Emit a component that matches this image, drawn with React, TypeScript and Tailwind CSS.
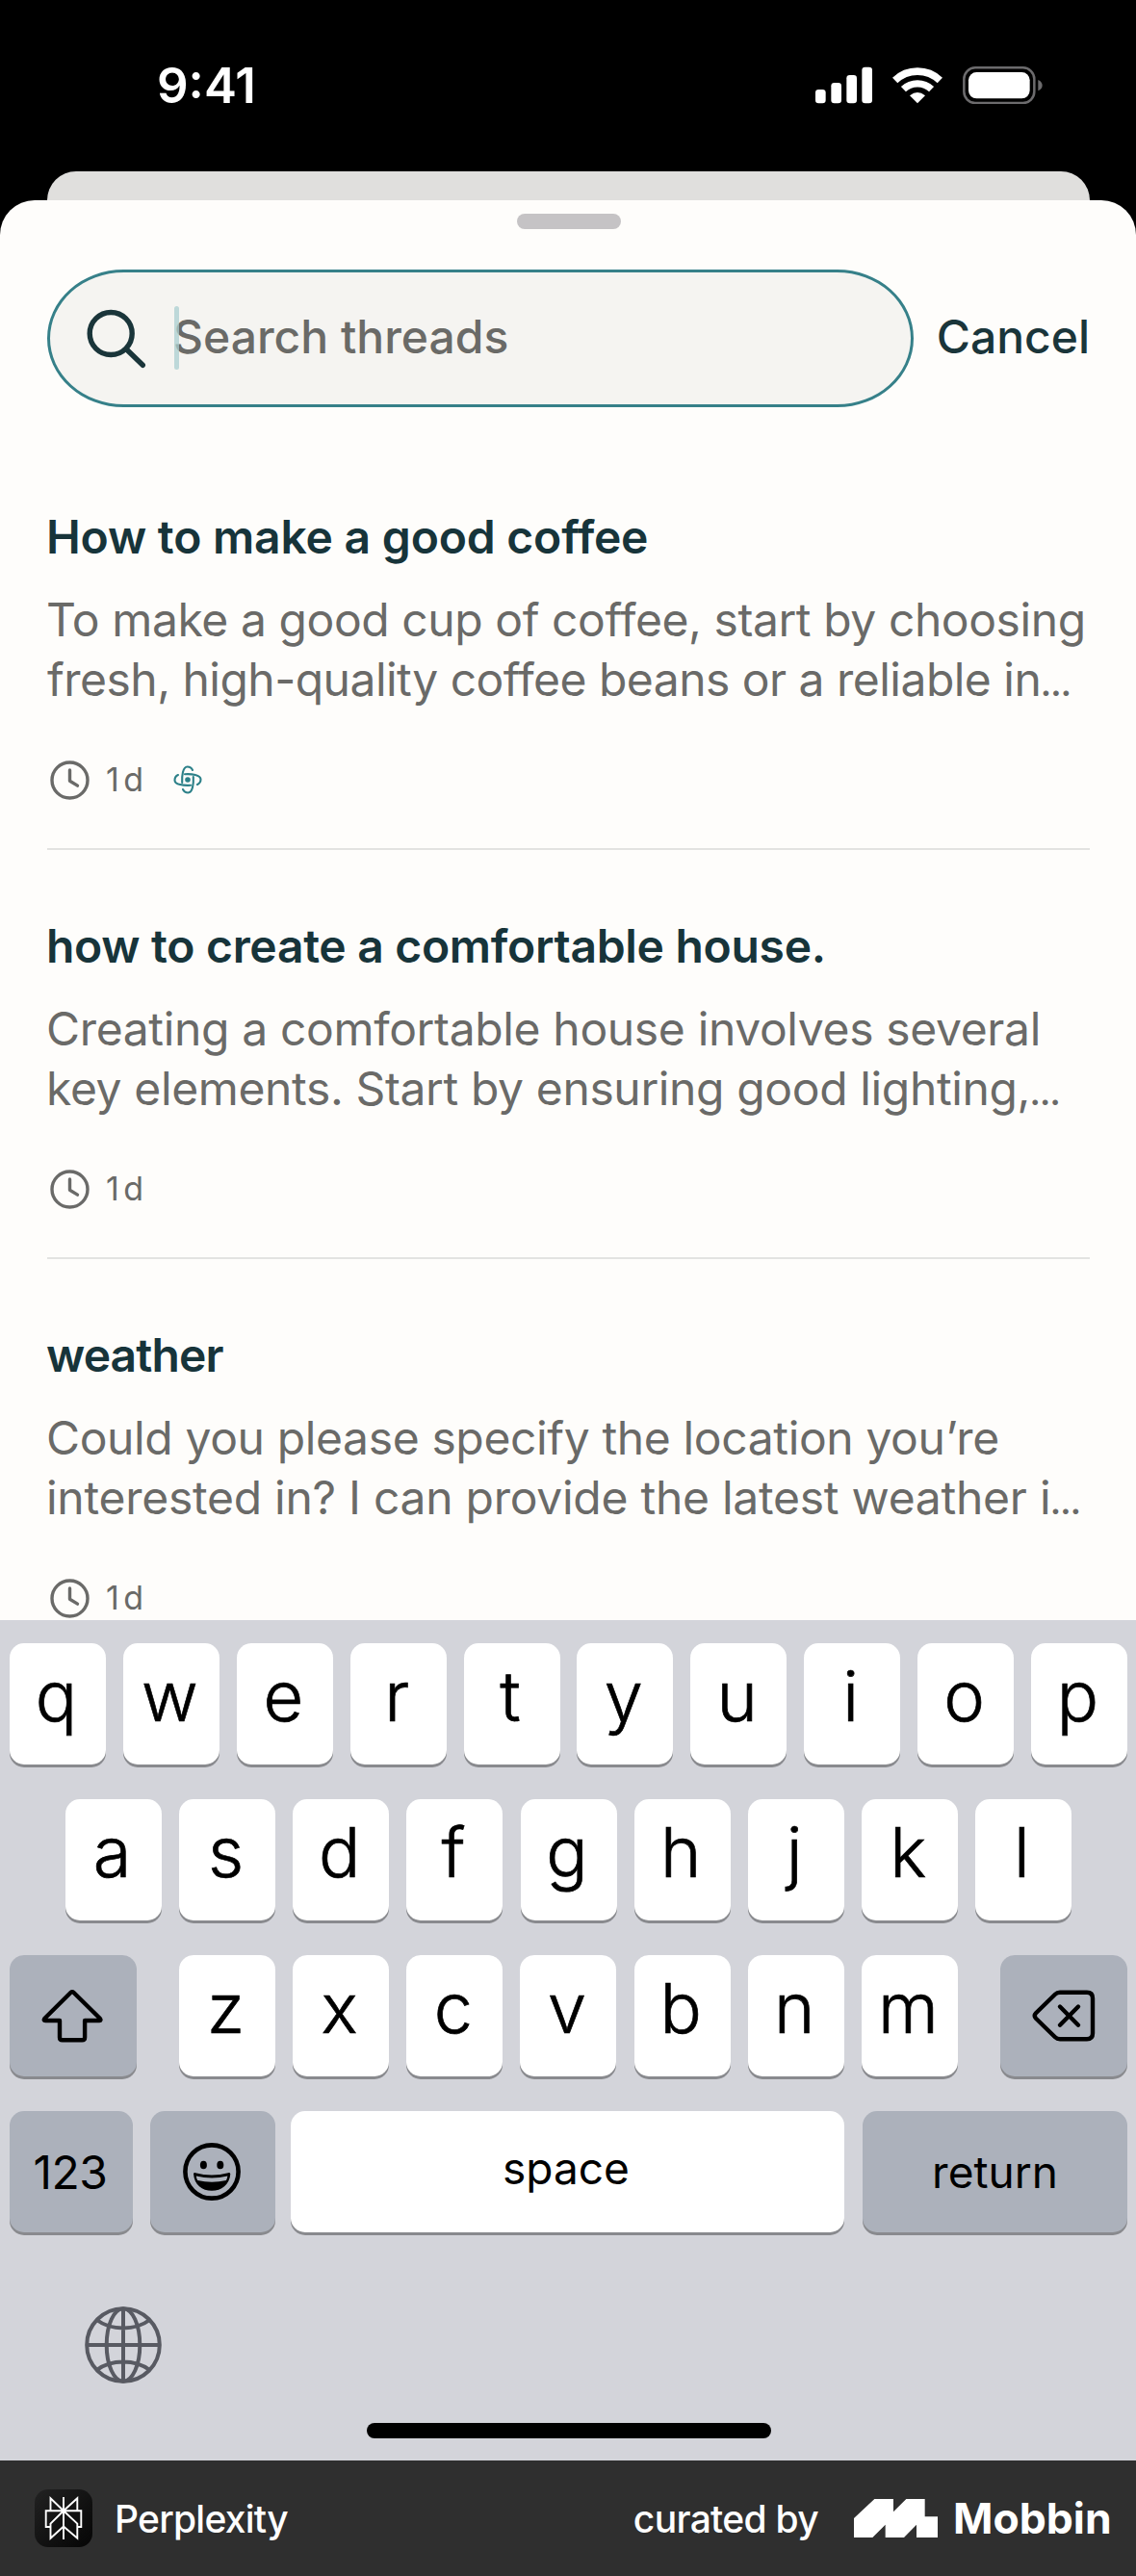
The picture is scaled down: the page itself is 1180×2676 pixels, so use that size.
import type { ReactNode } from "react";

function SignalIcon() {
  return (
    <svg className="h-[39.4px] w-[59px]" viewBox="80 55 177 118" fill="#fff">
      <rect x="80" y="127" width="32" height="43" rx="10" />
      <rect x="129" y="106" width="32" height="64" rx="10" />
      <rect x="177" y="82" width="32" height="88" rx="10" />
      <rect x="225" y="57" width="32" height="113" rx="10" />
    </svg>
  );
}

function WifiIcon() {
  return (
    <svg className="h-[39.4px] w-[52px]" viewBox="320 55 156 118" fill="none" stroke="#fff">
      <path d="M328 98.4A101.5 101.5 0 0 1 468 98.4" strokeWidth="23" />
      <path d="M354.3 126A63.5 63.5 0 0 1 441.7 126" strokeWidth="22" />
      <path d="M398 170L374 146Q398 126 422 146Z" fill="#fff" stroke="none" />
    </svg>
  );
}

function BatteryIcon() {
  return (
    <svg className="h-[39.4px] w-[83px]" viewBox="540 55 249 118">
      <rect x="544" y="59" width="219" height="110" rx="35" fill="none" stroke="#6c6b6d" strokeWidth="7.5" />
      <rect x="558" y="73" width="191" height="82" rx="25" fill="#fff" />
      <path d="M775 97Q788 103 788 114T775 131Z" fill="#6c6b6d" />
    </svg>
  );
}

function SearchIcon() {
  return (
    <svg className="size-[62px]" viewBox="90 320.5 62 62" fill="none" stroke="#1a353a" strokeWidth="5.4" strokeLinecap="round">
      <circle cx="115.2" cy="346" r="22" />
      <path d="M131.5 362.5L148.3 378.8" />
    </svg>
  );
}

function ClockIcon() {
  return (
    <svg className="size-[41px]" viewBox="-20.5 -20.5 41 41" fill="none" stroke="#6a6a68" strokeWidth="3.4" strokeLinecap="round" strokeLinejoin="round">
      <circle r="18.5" />
      <path d="M0 -10.5V0.8L8 5.6" />
    </svg>
  );
}

function KnotIcon() {
  const arm = "M-5.8 3C-6.2 -4 -5.2 -13.4 -0.4 -13.5Q3.4 -13.5 5 -10";
  return (
    <svg className="size-[30px]" viewBox="-15 -15 30 30" fill="none" stroke="#2c8088" strokeWidth="2.1" strokeLinecap="round">
      <path d={arm} />
      <path d={arm} transform="rotate(90)" />
      <path d={arm} transform="rotate(180)" />
      <path d={arm} transform="rotate(270)" />
      <circle r="2.8" fill="#2c8088" stroke="none" />
    </svg>
  );
}

function ShiftIcon() {
  return (
    <svg className="mr-0.5 h-14 w-16" viewBox="43.2 66 64 56" fill="none" stroke="#000" strokeWidth="4.4" strokeLinejoin="round">
      <path d="M73.8 69.8Q75.2 68.4 76.6 69.8L104 96.8Q105.6 99 103.4 99H88.3V116.4Q88.3 119.2 85.5 119.2H65Q62.2 119.2 62.2 116.4V99H47.4Q45 99 46.6 96.8Z" />
    </svg>
  );
}

function BackspaceIcon() {
  return (
    <svg className="mr-px h-14 w-[66px]" viewBox="1072 66.3 66 56" fill="none" stroke="#000" strokeWidth="4.4" strokeLinecap="round" strokeLinejoin="round">
      <path d="M1096 72Q1098 70 1101 70H1129Q1135 70 1135 76V112.6Q1135 118.6 1129 118.6H1101Q1098 118.6 1096 116.6L1076 97Q1073.5 94.3 1076 91.6Z" />
      <path d="M1101 84.8L1120 104M1120 84.8L1101 104" />
    </svg>
  );
}

function EmojiIcon() {
  return (
    <svg className="mr-[3px] size-[60px]" viewBox="-30 -30 60 60">
      <circle r="27.6" fill="none" stroke="#000" strokeWidth="4.6" />
      <ellipse cx="-8.6" cy="-7" rx="3.5" ry="4.3" />
      <ellipse cx="8.8" cy="-7" rx="3.5" ry="4.3" />
      <path d="M-19 2Q-18.5 0.8 -17 1.2Q0 5.6 17 1.2Q19 0.8 19.3 2.2C18.5 13.5 10 19.8 0 19.8S-18.3 13.5 -19 2Z" />
      <path d="M-16.2 4.4Q0 8.4 16.4 4.4Q16 6.8 15 9Q0 12.6 -14.8 9Q-16 6.6 -16.2 4.4Z" fill="#acb1bb" />
    </svg>
  );
}

function GlobeIcon() {
  return (
    <svg className="size-20" viewBox="-40 -40 80 80" fill="none" stroke="#585a62" strokeWidth="4">
      <circle r="37.8" />
      <ellipse rx="17.3" ry="37.8" />
      <path d="M0 -38V38M-38 0H38M-27.5 -26Q-16 -17.5 0 -17.5T27.5 -26M-27.5 26Q-16 17.5 0 17.5T27.5 26" />
    </svg>
  );
}

function PerplexityIcon() {
  return (
    <svg className="size-[60px] rounded-[14px] bg-linear-to-br from-[#222] to-[#060606]" viewBox="0 0 60 60" fill="none" stroke="#fff" strokeWidth="1.9">
      <path d="M30 8V52M30 22.3L16.5 9.2V22.3M30 22.3L44.3 9.2V22.3M16.5 39H11.7V22.3H48.3V39H44.3M30 22.3L16.5 35.6V50.8L30 38.5L44.3 50.8V35.6L30 22.3" />
    </svg>
  );
}

function MobbinIcon() {
  return (
    <svg className="h-10 w-[87px]" viewBox="81 78 261 120" fill="#fff">
      <path d="M81 138L145 78H204V118L244 78H302V133H342V198H276V158L237 198H179V158L139 198H81Z" />
    </svg>
  );
}

function Ellipsis() {
  return <span className="text-[28px] leading-none font-black tracking-normal">…</span>;
}

function Thread({ title, children, badge }: { title: ReactNode; children: ReactNode; badge?: boolean }) {
  return (
    <article className="h-[425px] shrink-0">
      <h2 className="-ml-px h-[62px] text-[48px] leading-[62px] font-semibold whitespace-nowrap text-[#17343a]">{title}</h2>
      <div className="mt-6 -ml-px h-[124px] text-[48px] leading-[62px] whitespace-nowrap text-[#6a6a68]">{children}</div>
      <div className="mt-[53px] ml-[3px] flex h-10 items-center text-[#6a6a68]">
        <ClockIcon />
        <span className="ml-[17px] w-[70px] text-[34px] leading-10 tracking-[4.5px]">1d</span>
        {badge && <KnotIcon />}
      </div>
      <div className="mt-[51px] h-0.5 bg-[#e3e3e1]" />
    </article>
  );
}

function Key({ className, children }: { className: string; children: ReactNode }) {
  return (
    <div className={`flex h-[126px] shrink-0 items-center justify-center rounded-[15px] text-black shadow-[0_3px_0_#898a8e] ${className}`}>
      {children}
    </div>
  );
}

function Letters({ keys }: { keys: string }) {
  return keys.split("").map((k) => (
    <Key key={k} className="w-[100px] bg-white pr-[3px] pb-4 text-[72px] leading-none font-light [-webkit-text-stroke:0.7px_#000]">
      {k}
    </Key>
  ));
}

export default function App() {
  return (
    <div className="flex h-[2676px] w-[1180px] flex-col overflow-hidden bg-black font-['Inter',sans-serif]">
      <header className="flex h-[178px] shrink-0 items-center pr-[97px] pb-px pl-[163px] text-white">
        <span className="text-[51px] leading-none font-semibold">9:41</span>
        <div className="ml-auto flex items-center">
          <SignalIcon />
          <div className="ml-[21px]">
            <WifiIcon />
          </div>
          <div className="ml-[21px]">
            <BatteryIcon />
          </div>
        </div>
      </header>

      <div className="mx-[49px] h-[30px] w-[1083px] shrink-0 rounded-t-[30px] bg-[#e0dfdd]" />

      <main className="flex h-[1475px] shrink-0 flex-col overflow-hidden rounded-t-[36px] bg-[#fefdfb] pr-12 pl-[49px]">
        <div className="mt-[14px] h-4 w-[108px] shrink-0 self-center rounded-full bg-[#c5c3c5]" />
        <div className="mt-[42px] flex h-[143px] shrink-0 items-center">
          <div className="flex h-[143px] w-[900px] items-center rounded-[80px/72px] border-[3px] border-[#368089] bg-[#f5f4f1] pl-[38px]">
            <SearchIcon />
            <div className="relative ml-[28px] pb-[3px] text-[48px] leading-[62px] font-medium whitespace-nowrap text-[#6a6a67]">
              Search threads
              <span className="absolute top-[-1px] left-px h-[66px] w-[5px] rounded-full bg-[#a9cfd0]/75" />
            </div>
          </div>
          <span className="ml-6 pb-[3px] text-[48px] leading-[62px] font-medium text-[#1a353a]">Cancel</span>
        </div>

        <section className="mt-[104px] flex flex-col">
          <Thread title={<span className="tracking-[-0.2px]">How to make a good coffee</span>} badge>
            <p className="tracking-[-0.42px]">To make a good cup of coffee, start by choosing</p>
            <p className="pl-px tracking-[-0.52px]">
              fresh, high-quality coffee beans or a reliable in
              <Ellipsis />
            </p>
          </Thread>
          <Thread title={<span className="tracking-[-0.3px]">how to create a comfortable house.</span>}>
            <p className="tracking-[-0.35px]">Creating a comfortable house involves several</p>
            <p className="tracking-[-0.37px]">
              key elements. Start by ensuring good lighting,
              <Ellipsis />
            </p>
          </Thread>
          <Thread title={<span className="tracking-[-0.9px]">weather</span>}>
            <p className="tracking-[-0.37px]">Could you please specify the location you’re</p>
            <p className="tracking-[-0.26px]">
              interested in? I can provide the latest weather i
              <Ellipsis />
            </p>
          </Thread>
        </section>
      </main>

      <section className="flex h-[873px] shrink-0 flex-col bg-[#d3d4da] pt-6">
        <div className="flex flex-col gap-9">
          <div className="flex justify-between pr-[9px] pl-[10px]">
            <Letters keys="qwertyuiop" />
          </div>
          <div className="flex justify-between pr-[67px] pl-[68px]">
            <Letters keys="asdfghjkl" />
          </div>
          <div className="flex justify-between pr-[9px] pl-[10px]">
            <Key className="w-[132px] bg-[#acb1bb]">
              <ShiftIcon />
            </Key>
            <div className="flex w-[809px] justify-between">
              <Letters keys="zxcvbnm" />
            </div>
            <Key className="w-[132px] bg-[#acb1bb]">
              <BackspaceIcon />
            </Key>
          </div>
          <div className="flex pl-[10px]">
            <Key className="w-[128px] bg-[#acb1bb] pt-px pr-0.5 text-[48px] tracking-[-0.5px]">123</Key>
            <Key className="ml-[18px] w-[130px] bg-[#acb1bb]">
              <EmojiIcon />
            </Key>
            <Key className="ml-4 w-[575px] bg-white pr-[3px] pb-[7px] text-[46px]">space</Key>
            <Key className="ml-[19px] w-[275px] bg-[#acb1bb] text-[46px]">return</Key>
          </div>
        </div>
        <div className="mt-[77px] ml-[88px]">
          <GlobeIcon />
        </div>
        <div className="mt-[41px] ml-[381px] h-4 w-[420px] rounded-full bg-black" />
      </section>

      <footer className="flex h-[120px] shrink-0 items-center bg-[#2f2f2f] pl-9 text-white">
        <PerplexityIcon />
        <span className="mt-[3px] ml-[23px] text-[39px] font-medium tracking-[-0.75px]">Perplexity</span>
        <div className="mr-[26px] ml-auto flex items-center">
          <span className="mt-[3px] mr-[37px] text-[39px] font-medium tracking-[-0.7px]">curated by</span>
          <MobbinIcon />
          <span className="ml-4 w-[164px] text-[44.5px] font-bold">Mobbin</span>
        </div>
      </footer>
    </div>
  );
}
